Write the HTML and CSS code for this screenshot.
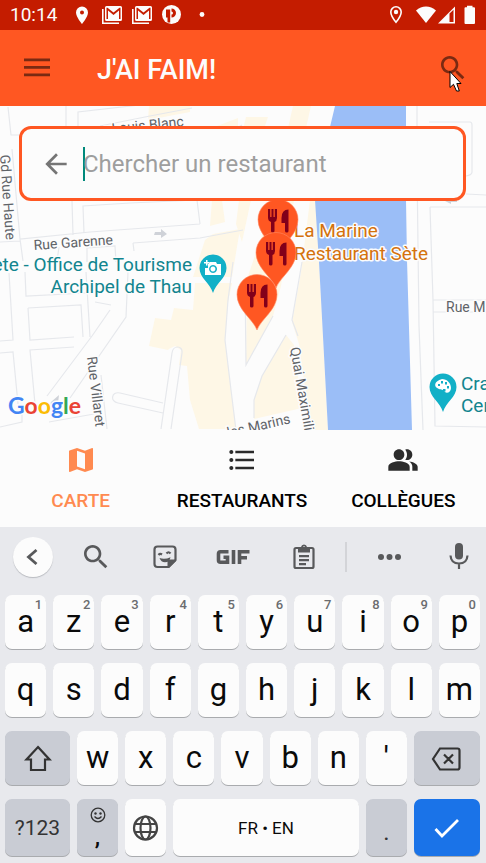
FILE: index.html
```html
<!DOCTYPE html>
<html lang="fr">
<head>
<meta charset="utf-8">
<meta name="viewport" content="width=device-width, initial-scale=1">
<title>J'ai faim!</title>
<link rel="stylesheet" href="styles.css">
</head>
<body>
<div class="status">
  <span class="clock">10:14</span>
  <div class="notices">
    <svg class="s-icon" viewBox="0 0 20 20"><path fill-rule="evenodd" d="M10 1.500a6 6 0 0 0-6 6C4 12 10 19 10 19s6-7 6-11.500a6 6 0 0 0-6-6zm0 4a2 2 0 1 1 0 4 2 2 0 0 1 0-4z"/></svg>
    <svg class="s-icon" viewBox="0 0 20 20"><path class="s-line" d="M.8 4v14.200H17"/><path fill-rule="evenodd" d="M4.500 1H18.500Q20 1 20 2.500V14.500Q20 16 18.500 16H4.500Q3 16 3 14.500V2.500Q3 1 4.500 1zM6 14V5.500l5.500 4.500L17 5.500V14h1.500V2.800h-1L11.500 7.500 5.500 2.800h-1V14z"/></svg>
    <svg class="s-icon" viewBox="0 0 20 20"><path class="s-line" d="M.8 4v14.200H17"/><path fill-rule="evenodd" d="M4.500 1H18.500Q20 1 20 2.500V14.500Q20 16 18.500 16H4.500Q3 16 3 14.500V2.500Q3 1 4.500 1zM6 14V5.500l5.500 4.500L17 5.500V14h1.500V2.800h-1L11.500 7.500 5.500 2.800h-1V14z"/></svg>
    <svg class="s-icon" viewBox="0 0 20 20"><circle cx="9.500" cy="9.500" r="9.500"/><path class="s-cut" d="M4 4.500h4.200V17.500H5.500V12.500H4zM9.500 3.500a4.500 4.500 0 0 1 0 9zM9.500 6.500v3a1.500 1.500 0 0 0 0-3z"/></svg>
    <svg class="s-icon" viewBox="0 0 20 20"><circle cx="10" cy="9.500" r="2.400"/></svg>
  </div>
  <div class="signals">
    <svg class="s-icon s-place" viewBox="0 0 20 20"><path class="s-line" d="M10 1.800a5.200 5.200 0 0 0-5.200 5.200C4.800 11 10 17.200 10 17.200s5.200-6.200 5.200-10.200A5.200 5.200 0 0 0 10 1.800z"/><circle cx="10" cy="7" r="2.200"/></svg>
    <svg class="s-icon" viewBox="0 0 20 20"><path d="M0 5.500Q4.500 1.500 10 1.500T20 5.500L10 18z"/></svg>
    <svg class="s-icon" viewBox="0 0 20 20"><path fill-rule="evenodd" d="M0 18.500L17 1.500V18.500zM11.500 8.500V17H15.500V4.800z"/></svg>
    <svg class="s-icon" viewBox="0 0 20 20"><path d="M7 .8h5.500v1.500h1.500q1 0 1 1V18q0 1-1 1H5.500q-1 0-1-1V3.300q0-1 1-1H7z"/></svg>
  </div>
</div>

<header class="appbar">
  <button class="bar-btn" aria-label="Menu"><svg class="i32" viewBox="0 0 32 32"><path d="M3 6.500h26v2.800H3zM3 14h26v2.800H3zM3 21.500h26v2.800H3z"/></svg></button>
  <h1 class="title">J'AI FAIM!</h1>
  <button class="bar-btn search-btn" aria-label="Rechercher"><svg class="i32" viewBox="0 0 24 24"><path d="M15.500 14h-.79l-.28-.27C15.410 12.590 16 11.110 16 9.500 16 5.910 13.090 3 9.500 3S3 5.910 3 9.500 5.910 16 9.500 16c1.610 0 3.090-.59 4.230-1.570l.27.28v.79l5 4.990L20.490 19l-4.990-5zm-6 0C7.010 14 5 11.990 5 9.500S7.010 5 9.500 5 14 7.010 14 9.500 11.990 14 9.500 14z"/></svg>
    <svg class="pointer" viewBox="0 0 14 24"><path d="M1 1.500V17.500L4.500 14.300 7.500 21h2.800L7.800 13.500H12z"/></svg>
  </button>
</header>

<main class="map">
  <svg class="map-art" viewBox="0 106 486 324" preserveAspectRatio="xMidYMid slice">
    <defs>
      <g id="pin">
        <path class="pin" d="M0 0C-4-11-20-20-20-35.500A20 20 0 0 1 20-35.500C20-20 4-11 0 0z"/>
        <path class="cutlery" d="M-10-46h2.200v8h1.300v-8h2v8h1.300v-8H-1v9q0 3-2.500 4V-24q0 1.500-1.800 1.500T-7-24V-33q-3-1-3-4.500zM10.500-45.500V-24q0 1.500-1.700 1.500T7-24v-8H3.500v-5q0-8.500 7-8.500z"/>
      </g>
      <path id="poi" d="M0 0C-3-10-13.500-15-13.500-25A13.500 13.500 0 0 1 13.500-25C13.500-15 3-10 0 0z"/>
    </defs>
    <g class="land">
      <path d="M149 106h41v6l-42 8zM212 128l26-10v10zM246 117h22l-4 12h-21zM293 106h18l-5 22h-18z"/>
      <path d="M212 200h10l3 22-15 4zM239 200h12l-9 42-6-18zM205 240l8-6 27-5-8 48h-39z"/>
      <path d="M195 283h37l-4 20-3 37 6 50 5 39h-37l-9-29-3-34-8-1 2-15-6-4-6 3-1 1-19-4 6-28 16 2 3-12 19 2z"/>
      <path d="M262 235l-15 44-1 86 27-49 8-30 13-86h-22z"/>
      <path d="M310 200h6l3 60 9 170h-17l-12-86-7-22 9-50z"/>
      <path d="M286 335l-24 41-8 24v19l48-11-8-63z"/>
    </g>
    <path class="water" d="M335 106h71v94l1 60 5 170h-84l-9-168-4-62 15-73z"/>
    <g class="roads">
      <path d="M8 107l3 28h9M66 106v22M78 128v-16l70-8M100 126l50-10 42-8M12 149l8 90 70-7 110-8M72 201l1 34M84 233l-1-27 47-3 67-3 3 24M0 242l20-1M133 243l67-5 43-8M133 243l1 8M57 261l2-14M87 262v-14l28-2 1 16M20 239l3 22"/>
      <path d="M9 273l4 67-13 1M0 353l13-1 5 52M0 427l22-5v-9M25 272l1 24 60-3M28 308l53-3 2 32M28 308l2 32 44-3M74 347l-44 3 5 54M128 272l-2 45-56 81M110 310l-18 26-45 60M86 272l4 65M95 302l16 3M49 422l45-8M101 375l6 54"/>
      <path d="M161 429l11-76c1-8 11-8 10 0l-11 76M163 403l-43-10c-9-2-10 9-2 10l45 10M233 262l-5 38-3 40 6 50 5 40M302 262l-10 58 6 16M286 335l-24 41-8 24v18M232 131l10-6M245 279l1 86 27-49"/>
      <path d="M417 106v60l2 160 4 104M430 207l3 93 2 126 51 1M429 122h41q2 0 2 3v47q0 3-6 4M466 194l20 1M430 207h56M433 300h53M433 312h53"/>
    </g>
    <path class="arrow" d="M155 232h6v-3l6 5-6 4v-3h-7zM443 200l7-4v3h7v3h-6v2zM51 402l8-7-1 8-3-1-6 5z"/>

    <g class="street">
      <text transform="translate(184 126) rotate(-6)" text-anchor="end">Rue Louis Blanc</text>
      <text transform="translate(0 155) rotate(86)">Gd Rue Haute</text>
      <text transform="translate(34 250) rotate(-4)">Rue Garenne</text>
      <text transform="translate(87 357) rotate(83)">Rue Villaret</text>
      <text transform="translate(290 348) rotate(80)">Quai Maximilien</text>
      <text transform="translate(291 423) rotate(-13)" text-anchor="end">Rue des Marins</text>
      <text x="446" y="312">Rue M</text>
    </g>
    <g class="place teal">
      <text x="192" y="271" text-anchor="end">Sète - Office de Tourisme</text>
      <text x="192" y="293" text-anchor="end">Archipel de Thau</text>
      <text x="461" y="390">Cra</text>
      <text x="461" y="412">Cen</text>
    </g>
    <g class="place amber">
      <text x="294" y="237">La Marine</text>
      <text x="294" y="260">Restaurant Sète</text>
    </g>
    <g transform="translate(213 293)">
      <use href="#poi" class="poi"/>
      <path class="white" fill-rule="evenodd" d="M-3-31h6l1 2h4v11H-8v-7h3v-4h1zM0-28a4 4 0 1 0 .1 0zM0-26.500a2.500 2.500 0 1 1-.1 0zM-7-33h1.500v2h2v1.500h-2v2H-7v-2h-2V-31h2z"/>
    </g>
    <g transform="translate(443 412)">
      <use href="#poi" class="poi"/>
      <path class="white" d="M-1-33C4-33 8-29 8-24c0 4-4 6-6 4-2-3-4-2-6-3-6-2-5-8 3-10z"/>
      <path class="poi" d="M-5-28h2v2h-2zM-2-31h2v2.500h-2zM2-30h2v2.500H2zM4-26h2v2.500H4zM0-23h2.500v2.500H0z"/>
    </g>
    <use href="#pin" x="278" y="255"/>
    <use href="#pin" x="276" y="288"/>
    <use href="#pin" x="257" y="330"/>
    <text class="brand" x="8" y="414"><tspan class="g-blue">G</tspan><tspan class="g-red">o</tspan><tspan class="g-yellow">o</tspan><tspan class="g-blue">g</tspan><tspan class="g-green">l</tspan><tspan class="g-red">e</tspan></text>
  </svg>
  <form class="search">
    <button class="back" type="button" aria-label="Retour"><svg class="i32" viewBox="0 0 24 24"><path d="M20 11H7.830l5.590-5.590L12 4l-8 8 8 8 1.410-1.410L7.830 13H20v-2z"/></svg></button>
    <input class="query" type="text" placeholder="Chercher un restaurant" aria-label="Chercher un restaurant">
  </form>
</main>

<nav class="tabs">
  <a class="tab active" href="#carte"><svg class="i32" viewBox="0 0 24 24"><path d="M20.500 3l-.16.03L15 5.100 9 3 3.360 4.900c-.21.07-.36.25-.36.48V20.500c0 .28.22.5.5.5l.16-.03L9 18.900l6 2.100 5.640-1.900c.21-.07.36-.25.36-.48V3.500c0-.28-.22-.5-.5-.5zM15 19l-6-2.110V5l6 2.110V19z"/></svg>CARTE</a>
  <a class="tab" href="#restaurants"><svg class="i32" viewBox="0 0 24 24"><path d="M4 10.500c-.83 0-1.500.67-1.500 1.500s.67 1.500 1.500 1.500 1.500-.67 1.500-1.500-.67-1.500-1.500-1.500zm0-6c-.83 0-1.500.67-1.500 1.500S3.170 7.500 4 7.500 5.500 6.830 5.500 6 4.830 4.500 4 4.500zm0 12c-.83 0-1.500.68-1.500 1.500s.68 1.500 1.500 1.500 1.500-.68 1.500-1.500-.67-1.500-1.500-1.500zM7 19h14v-2H7v2zm0-6h14v-2H7v2zm0-8v2h14V5H7z"/></svg>RESTAURANTS</a>
  <a class="tab" href="#collegues"><svg class="i32" viewBox="0 0 24 24"><path d="M16.670 13.130C18.040 14.060 19 15.320 19 17v3h4v-3c0-2.180-3.570-3.470-6.330-3.870zM15 12c2.210 0 4-1.790 4-4s-1.790-4-4-4c-.47 0-.91.1-1.330.24C14.500 5.270 15 6.580 15 8s-.5 2.730-1.330 3.760c.42.14.86.24 1.330.24zM9 12c2.210 0 4-1.790 4-4s-1.790-4-4-4-4 1.790-4 4 1.790 4 4 4zM9 13c-2.670 0-8 1.340-8 4v3h16v-3c0-2.660-5.330-4-8-4z"/></svg>COLLÈGUES</a>
</nav>

<section class="keyboard" aria-label="Clavier">
  <div class="tools">
    <button class="tool round" aria-label="Fermer"><svg class="i32" viewBox="0 0 32 32"><path class="stroke" d="M19.500 9l-8 7 8 7"/></svg></button>
    <button class="tool" aria-label="Recherche"><svg class="i32" viewBox="0 0 24 24"><path d="M15.500 14h-.79l-.28-.27C15.410 12.590 16 11.110 16 9.500 16 5.910 13.090 3 9.500 3S3 5.910 3 9.500 5.910 16 9.500 16c1.610 0 3.090-.59 4.230-1.570l.27.28v.79l5 4.990L20.490 19l-4.990-5zm-6 0C7.010 14 5 11.990 5 9.500S7.010 5 9.500 5 14 7.010 14 9.500 11.990 14 9.500 14z"/></svg></button>
    <button class="tool" aria-label="Autocollants"><svg class="i32" viewBox="0 0 32 32"><path class="stroke thin" d="M8.500 5.500h15q3 0 3 3V19l-7 7H8.500q-3 0-3-3V8.500q0-3 3-3z"/><path d="M27 18.500V20l-7 7h-1.500v-5.500q0-3 3-3zM10.500 17q5 2 11-.8-1 5-5.500 5-4 0-5.500-4.200z"/><path class="stroke thin" d="M9.500 14q1.500-1.800 3.500-.5M17.500 12.500q2-2.500 4 0"/></svg></button>
    <button class="tool" aria-label="GIF"><svg class="i32" viewBox="0 0 32 32"><path class="stroke heavy" d="M11.500 10.800H3.500q-2 0-2 2v6.400q0 2 2 2h7v-5H6.500M16.500 9v14M22.500 23V10.800H32.500M22.500 16.800H30"/></svg></button>
    <button class="tool" aria-label="Presse-papiers"><svg class="i32" viewBox="0 0 32 32"><path class="stroke thin" d="M8 7h16q1.500 0 1.500 1.500v17q0 1.500-1.500 1.500H8q-1.500 0-1.500-1.500v-17Q6.500 7 8 7z"/><path fill-rule="evenodd" d="M10 6h3q.5-2.500 3-2.500T19 6h3v5.500H10zM16 5.200a1.300 1.300 0 1 0 .1 0zM11 14h10v2.200H11zM11 18h10v2.200H11zM11 22h7v2.200h-7z"/></svg></button>
    <span class="split"></span>
    <button class="tool" aria-label="Plus"><svg class="i32" viewBox="0 0 32 32"><circle cx="8" cy="16" r="3"/><circle cx="16.500" cy="16" r="3"/><circle cx="25" cy="16" r="3"/></svg></button>
    <button class="tool" aria-label="Dictée"><svg class="i32" viewBox="0 0 32 32"><path d="M17 2q4 0 4 4v8.500q0 4-4 4t-4-4V6q0-4 4-4z"/><path class="stroke thin" d="M8.500 14.500q.5 8 8.500 8t8.500-8M17 22v6"/></svg></button>
  </div>
  <div class="row ten">
    <button class="key">a<sup>1</sup></button><button class="key">z<sup>2</sup></button><button class="key">e<sup>3</sup></button><button class="key">r<sup>4</sup></button><button class="key">t<sup>5</sup></button><button class="key">y<sup>6</sup></button><button class="key">u<sup>7</sup></button><button class="key">i<sup>8</sup></button><button class="key">o<sup>9</sup></button><button class="key">p<sup>0</sup></button>
  </div>
  <div class="row ten">
    <button class="key">q</button><button class="key">s</button><button class="key">d</button><button class="key">f</button><button class="key">g</button><button class="key">h</button><button class="key">j</button><button class="key">k</button><button class="key">l</button><button class="key">m</button>
  </div>
  <div class="row third">
    <button class="key dark" aria-label="Majuscule"><svg class="i32" viewBox="0 0 32 32"><path class="stroke thin" d="M16 5L27.500 17.500H23V28H9V17.500H4.500z"/></svg></button>
    <button class="key">w</button><button class="key">x</button><button class="key">c</button><button class="key">v</button><button class="key">b</button><button class="key">n</button><button class="key">'</button>
    <button class="key dark" aria-label="Effacer"><svg class="i32" viewBox="0 0 32 32"><path class="stroke thin" d="M9 6.500h17.500q2 0 2 2v17q0 2-2 2H9L2 17zM13 12.500l9 9M22 12.500l-9 9"/></svg></button>
  </div>
  <div class="row fourth">
    <button class="key dark small">?123</button>
    <button class="key dark comma"><svg class="i16" viewBox="0 0 16 16"><circle class="stroke fine" cx="8" cy="8" r="6.800"/><circle cx="5.500" cy="6.500" r="1.200"/><circle cx="10.500" cy="6.500" r="1.200"/><path class="stroke fine" d="M4.500 9.500q3.500 4 7 0"/></svg><span class="mark">,</span></button>
    <button class="key" aria-label="Langue"><svg class="i32 globe" viewBox="0 0 32 32"><circle class="stroke thin" cx="15.500" cy="16" r="11.500"/><ellipse class="stroke thin" cx="15.500" cy="16" rx="5" ry="11.500"/><path class="stroke thin" d="M5 12h21M5 20h21"/></svg></button>
    <button class="key space">FR • EN</button>
    <button class="key dark dot">.</button>
    <button class="key enter" aria-label="Valider"><svg class="i32" viewBox="0 0 32 32"><path class="stroke" d="M4.500 17l6.500 7L27 8"/></svg></button>
  </div>
</section>
</body>
</html>
```
FILE: styles.css
```css
* {
  box-sizing: border-box;
}

body {
  margin: 0;
  min-height: 100vh;
  display: flex;
  flex-direction: column;
  background: #fcfcfc;
  font-family: Roboto, "Liberation Sans", sans-serif;
  overflow-x: hidden;
}

button {
  margin: 0;
  padding: 0;
  border: 0;
  background: none;
  color: inherit;
  font: inherit;
}

svg {
  display: block;
  fill: currentColor;
}

.i32 {
  width: 32px;
  height: 32px;
  overflow: visible;
}

.i16 {
  width: 16px;
  height: 16px;
}

.stroke {
  fill: none;
  stroke: currentColor;
  stroke-width: 2.8;
}

.thin {
  stroke-width: 2.2;
}

.fine {
  stroke-width: 1.3;
}

.heavy {
  stroke-width: 3.6;
}

/* Status bar */
.status {
  display: flex;
  align-items: center;
  height: 30px;
  padding: 0 6px 0 10px;
  background: #c41c00;
  color: #fcfcfc;
}

.clock {
  width: 62px;
  font-size: 19px;
  line-height: 30px;
}

.notices {
  display: flex;
  gap: 10px;
  flex: 1;
}

.signals {
  display: flex;
  gap: 2px;
}

.s-icon {
  width: 20px;
  height: 20px;
}

.s-place {
  margin-right: 8px;
}

.s-line {
  fill: none;
  stroke: currentColor;
  stroke-width: 1.6;
}

.s-cut {
  fill: #c41c00;
  fill-rule: evenodd;
}

/* App bar */
.appbar {
  display: flex;
  align-items: center;
  height: 76px;
  padding: 0 17px 0 21px;
  background: #ff5722;
}

.bar-btn {
  color: #7a2a12;
}

.title {
  flex: 1;
  margin: 0;
  padding: 4px 0 0 44px;
  color: #fcfcfc;
  font-size: 27px;
  font-weight: 500;
  line-height: 32px;
}

.search-btn {
  position: relative;
}

.pointer {
  position: absolute;
  left: 12px;
  top: 18px;
  width: 14px;
  height: 24px;
  fill: #fff;
  stroke: #000;
  stroke-width: 1;
}

/* Map */
.map {
  position: relative;
  flex: 1 0 324px;
  overflow: hidden;
}

.map-art {
  position: absolute;
  inset: 0;
  width: 100%;
  height: 100%;
}

.land {
  fill: #fef7e6;
}

.water {
  fill: #9bbef7;
}

.roads {
  fill: none;
  stroke: #e6e8ec;
  stroke-width: 1.2;
}

.arrow {
  fill: #cfd2d8;
}

.street {
  fill: #5f6368;
  font-size: 14px;
}

.place {
  font-size: 19px;
}

.street,
.place,
.brand {
  paint-order: stroke;
  stroke: #fcfcfc;
  stroke-width: 3;
  stroke-linejoin: round;
}

.teal {
  fill: #12858f;
}

.amber {
  fill: #d4720d;
}

.poi {
  fill: #12b0c7;
}

.white {
  fill: #fff;
}

.pin {
  fill: #ff5722;
  stroke: #ff8a65;
  stroke-width: 0.6;
}

.cutlery {
  fill: #82001a;
}

.brand {
  font-family: Lato, Roboto, sans-serif;
  font-size: 23px;
  font-weight: 700;
}

.g-blue {
  fill: #4285f4;
}

.g-red {
  fill: #ea4335;
}

.g-yellow {
  fill: #fbbc05;
}

.g-green {
  fill: #34a853;
}

/* Search card */
.search {
  position: absolute;
  top: 20px;
  left: 19px;
  right: 20px;
  display: flex;
  align-items: center;
  height: 75px;
  padding: 0 18px;
  border: 3px solid #ff5722;
  border-radius: 12px;
  background: #fcfcfc;
}

.back {
  color: #757575;
}

.query {
  flex: 1;
  min-width: 0;
  height: 34px;
  margin-left: 11px;
  padding: 0;
  border: 0;
  outline: 0;
  background: linear-gradient(#00897b, #00897b) left / 2px 100% no-repeat;
  font-family: inherit;
  font-size: 24px;
}

.query::placeholder {
  color: #9e9e9e;
  opacity: 1;
}

/* Tabs */
.tabs {
  display: grid;
  grid-template-columns: repeat(3, 1fr);
  height: 97px;
  padding-right: 2px;
  background: #fcfcfc;
}

.tab {
  display: flex;
  flex-direction: column;
  align-items: center;
  gap: 14px;
  padding-top: 14px;
  color: #000;
  font-size: 19px;
  font-weight: 500;
  line-height: 22px;
  text-decoration: none;
}

.tab svg {
  color: #2b2b2b;
}

.tab.active,
.tab.active svg {
  color: #ff8a50;
}

/* Keyboard */
.keyboard {
  display: flex;
  flex-direction: column;
  gap: 14px;
  padding-bottom: 7px;
  background: #e8e9ed;
}

.tools {
  display: grid;
  grid-template-columns: 65fr 62fr 75fr 62fr 79fr 4fr 83fr 55fr;
  align-items: center;
  justify-items: center;
  height: 60px;
  margin-bottom: -6px;
  color: #58595b;
}

.round {
  display: grid;
  place-items: center;
  width: 40px;
  height: 40px;
  border-radius: 50%;
  background: #fcfcfc;
  box-shadow: 0 1px 1px #b9bbc0;
}

.split {
  width: 2px;
  height: 30px;
  background: #d3d4d8;
}

.row {
  display: grid;
  gap: 7px;
  height: 54px;
  padding: 0 6px 0 5px;
}

.ten {
  grid-template-columns: repeat(10, 1fr);
}

.third {
  grid-template-columns: 65fr repeat(7, 41fr) 66fr;
}

.fourth {
  grid-template-columns: 65fr 41fr 41fr 186fr 41fr 66fr;
  height: 57px;
}

.key {
  position: relative;
  display: flex;
  align-items: center;
  justify-content: center;
  min-width: 0;
  border-radius: 7px;
  background: #fcfcfc;
  box-shadow: 0 1px 0 #a9abae;
  color: #0a0a0a;
  font-size: 31px;
  line-height: 36px;
}

.key sup {
  position: absolute;
  top: 2px;
  right: 4px;
  color: #6b6c6f;
  font-size: 13px;
  font-weight: 500;
  line-height: 16px;
}

.dark {
  background: #c9ccd4;
  color: #333;
}

.small {
  font-size: 21px;
}

.comma {
  flex-direction: column;
  gap: 2px;
  line-height: 24px;
}

.mark {
  color: #0a0a0a;
  font-size: 24px;
  font-weight: 500;
}

.globe {
  color: #444;
}

.space {
  font-size: 17px;
}

.dot {
  padding-top: 8px;
  font-size: 24px;
}

.enter {
  background: #1a73e8;
  color: #fff;
}
```
